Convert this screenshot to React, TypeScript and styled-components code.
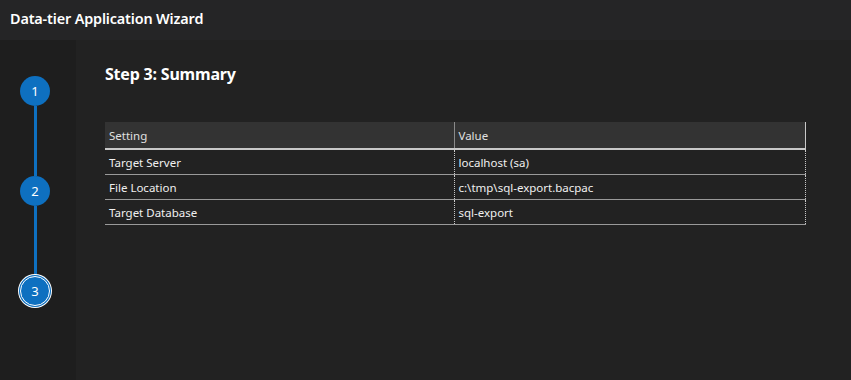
import React from "react";
import styled, { createGlobalStyle } from "styled-components";

const Global = createGlobalStyle`
  html, body { margin: 0; padding: 0; background: #1f1f1f; }
  body { font-family: "Noto Sans", "Open Sans", sans-serif; color: #e8e8e8; }
`;

const Page = styled.div`
  width: 851px;
  height: 380px;
  display: flex;
  flex-direction: column;
  background: #1e1e1e;
  overflow: hidden;
`;

const Header = styled.header`
  height: 40px;
  flex: none;
  background: #252526;
  display: flex;
  align-items: center;
  padding-left: 10px;
  padding-bottom: 4px;
  box-sizing: border-box;
  font-size: 14.4px;
  font-weight: 600;
  color: #ffffff;
  letter-spacing: -0.15px;
`;

const Body = styled.div`
  flex: 1;
  display: flex;
  min-height: 0;
`;

const StepRail = styled.nav`
  width: 76px;
  flex: none;
  display: flex;
  flex-direction: column;
  align-items: center;
  padding-top: 36px;
  padding-right: 6px;
  box-sizing: border-box;
`;

const StepCircle = styled.div<{ $current?: boolean }>`
  width: 30px;
  height: 30px;
  border-radius: 50%;
  background: #0e70c0;
  color: #ffffff;
  display: flex;
  align-items: center;
  justify-content: center;
  font-size: 13px;
  box-sizing: border-box;
  flex: none;
  ${(p) =>
    p.$current &&
    `
    border: 1px solid #ffffff;
    box-shadow: 0 0 0 1px #0e70c0, 0 0 0 2px #ffffff;
  `}
`;

const Connector = styled.div`
  width: 3px;
  height: 70px;
  background: #0e70c0;
  flex: none;
`;

const Content = styled.main`
  flex: 1;
  background: #222222;
  padding: 23px 46px 0 29px;
`;

const Title = styled.h2`
  margin: 0;
  font-size: 16px;
  font-weight: 700;
  color: #ffffff;
  letter-spacing: -0.2px;
`;

const Table = styled.table`
  margin-top: 37px;
  width: 700px;
  border-collapse: collapse;
  font-size: 11.5px;
  color: #f0f0f0;
  table-layout: fixed;
`;

const HeadCell = styled.th<{ $last?: boolean }>`
  background: #333333;
  height: 26px;
  padding: 0 4px;
  text-align: left;
  font-weight: 400;
  color: #e0e0e0;
  border-bottom: 2px solid #c8c8c8;
  border-right: ${(p) => (p.$last ? "1px solid #c8c8c8" : "1px solid #8a8a8a")};
`;

const Cell = styled.td<{ $last?: boolean }>`
  height: 24px;
  padding: 0 4px;
  border-bottom: 1px solid #9a9a9a;
  border-right: 1px dotted #c8c8c8;
  white-space: nowrap;
`;

const rows = [
  ["Target Server", "localhost (sa)"],
  ["File Location", "c:\\tmp\\sql-export.bacpac"],
  ["Target Database", "sql-export"],
];

export default function App() {
  return (
    <Page>
      <Global />
      <Header>Data-tier Application Wizard</Header>
      <Body>
        <StepRail>
          <StepCircle>1</StepCircle>
          <Connector />
          <StepCircle>2</StepCircle>
          <Connector />
          <StepCircle $current>3</StepCircle>
        </StepRail>
        <Content>
          <Title>Step 3: Summary</Title>
          <Table>
            <colgroup>
              <col style={{ width: 349 }} />
              <col style={{ width: 351 }} />
            </colgroup>
            <thead>
              <tr>
                <HeadCell>Setting</HeadCell>
                <HeadCell $last>Value</HeadCell>
              </tr>
            </thead>
            <tbody>
              {rows.map(([k, v]) => (
                <tr key={k}>
                  <Cell>{k}</Cell>
                  <Cell $last>{v}</Cell>
                </tr>
              ))}
            </tbody>
          </Table>
        </Content>
      </Body>
    </Page>
  );
}
